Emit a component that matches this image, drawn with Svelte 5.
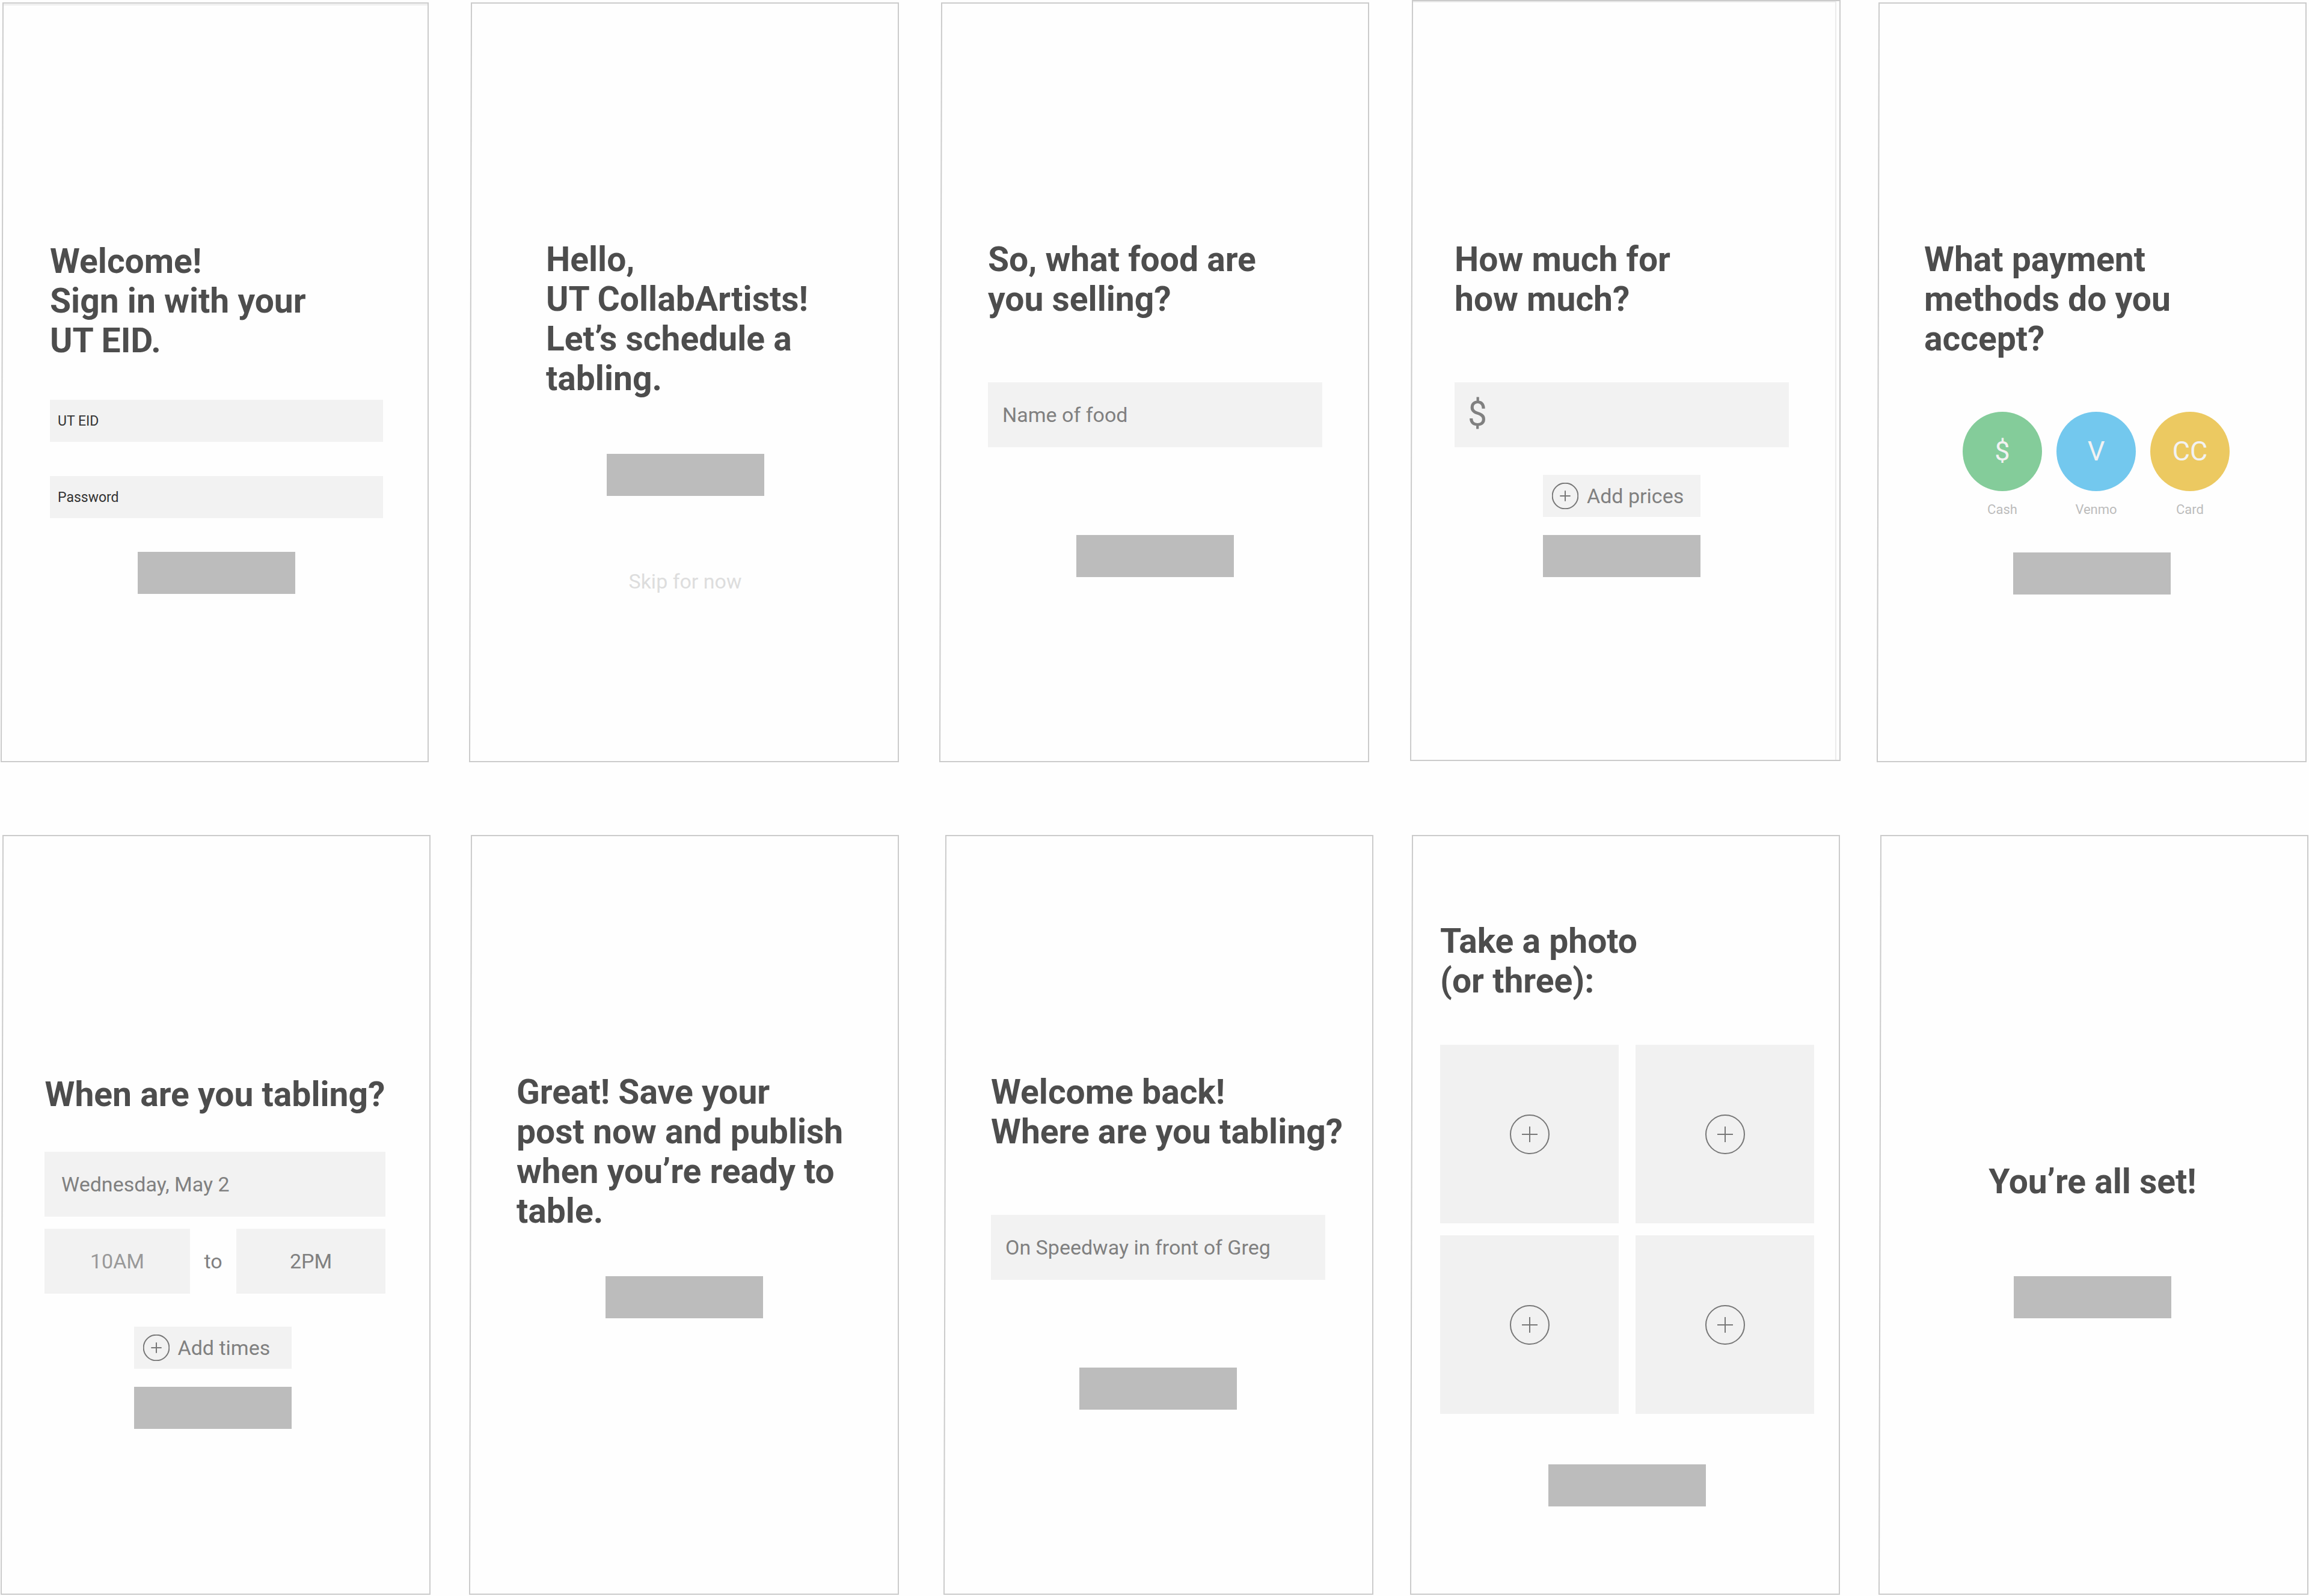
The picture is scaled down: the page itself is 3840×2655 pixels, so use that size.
<script>
  // Outline of each artboard, in the units of a 714 x 1262 frame.
  const frame = '3,0 713,0 713,1262 0,1262';
  const raisedFrame = '3,-4 714,-4 714,1260 0,1260';

  const methods = [
    { mark: '$', name: 'Cash', tone: 'green' },
    { mark: 'V', name: 'Venmo', tone: 'blue' },
    { mark: 'CC', name: 'Card', tone: 'yellow' }
  ];
  const photos = [1, 2, 3, 4];
</script>

{#snippet outline(points, rule = '')}
  <svg class="outline" viewBox="0 0 714 1262" preserveAspectRatio="none" aria-hidden="true">
    {#if rule}<polyline points={rule} />{/if}
    <polygon {points} />
  </svg>
{/snippet}

{#snippet plus()}
  <svg class="plus" viewBox="0 0 66 66" aria-hidden="true">
    <circle cx="33" cy="33" r="32" />
    <path d="M33 20v26M20 33h26" />
  </svg>
{/snippet}

<main class="page">
  <div class="row first">
    <section class="board sign-in">
      {@render outline(frame, '3,3 713,3')}
      <h2>Welcome!<br />Sign in with your<br />UT EID.</h2>
      <input class="field small" type="text" placeholder="UT EID" aria-label="UT EID" />
      <input class="field small" type="password" placeholder="Password" aria-label="Password" />
      <button class="next" aria-label="Sign in"></button>
    </section>

    <section class="board hello">
      {@render outline(frame)}
      <h2>Hello,<br />UT CollabArtists!<br />Let’s schedule a<br />tabling.</h2>
      <button class="next" aria-label="Start"></button>
      <a class="skip" href="#skip">Skip for now</a>
    </section>

    <section class="board food">
      {@render outline(frame)}
      <h2>So, what food are<br />you selling?</h2>
      <input class="field" type="text" placeholder="Name of food" aria-label="Name of food" />
      <button class="next" aria-label="Next"></button>
    </section>

    <section class="board price">
      {@render outline(raisedFrame, '3,-2 707,-2 707,1260')}
      <h2>How much for<br />how much?</h2>
      <input class="field amount" type="text" placeholder="$" aria-label="Price in dollars" />
      <button class="add">{@render plus()}Add prices</button>
      <button class="next" aria-label="Next"></button>
    </section>

    <section class="board payment">
      {@render outline(frame)}
      <h2>What payment<br />methods do you<br />accept?</h2>
      <div class="methods">
        {#each methods as m}
          <button class="method">
            <span class="disc {m.tone}">{m.mark}</span>
            <span class="name">{m.name}</span>
          </button>
        {/each}
      </div>
      <button class="next" aria-label="Next"></button>
    </section>
  </div>

  <div class="row second">
    <section class="board when">
      {@render outline(frame)}
      <h2>When are you tabling?</h2>
      <input class="field" type="text" value="Wednesday, May 2" aria-label="Date" />
      <div class="times">
        <input class="field from" type="text" value="10AM" aria-label="Start time" />
        <span>to</span>
        <input class="field" type="text" value="2PM" aria-label="End time" />
      </div>
      <div class="actions">
        <button class="add">{@render plus()}Add times</button>
        <button class="next" aria-label="Next"></button>
      </div>
    </section>

    <section class="board save">
      {@render outline(frame)}
      <h2>Great! Save your<br />post now and publish<br />when you’re ready to<br />table.</h2>
      <button class="next" aria-label="Save"></button>
    </section>

    <section class="board where">
      {@render outline(frame)}
      <h2>Welcome back!<br />Where are you tabling?</h2>
      <input class="field" type="text" value="On Speedway in front of Greg" aria-label="Place" />
      <button class="next" aria-label="Next"></button>
    </section>

    <section class="board photo">
      {@render outline(frame)}
      <h2>Take a photo<br />(or three):</h2>
      <div class="photos">
        {#each photos as n}
          <button class="tile" aria-label="Add photo {n}">{@render plus()}</button>
        {/each}
      </div>
      <button class="next" aria-label="Next"></button>
    </section>

    <section class="board done">
      {@render outline(frame)}
      <h2>You’re all set!</h2>
      <button class="next" aria-label="Finish"></button>
    </section>
  </div>
</main>

<style>
  :global(body) {
    background: #fefefe;
  }

  .page {
    display: flex;
    flex-direction: column;
    gap: 123px;
    padding: 5px 0 3px;
    font-family: Roboto, 'Liberation Sans', sans-serif;
    font-size: 34px;
    line-height: 40px;
    color: #808080;
  }

  /* Artboards sit on the odd tracks, the space between them on the even ones. */
  .row {
    display: grid;
  }
  .first {
    grid-template-columns: 711fr 68fr 714fr 68fr 714fr 69fr 714fr 62fr 714fr;
    padding: 0 4px 0 2px;
  }
  .second {
    grid-template-columns: 714fr 65fr 714fr 75fr 714fr 62fr 714fr 65fr 714fr;
    padding: 0 1px 0 2px;
  }
  .board:nth-child(1) { grid-column: 1; }
  .board:nth-child(2) { grid-column: 3; }
  .board:nth-child(3) { grid-column: 5; }
  .board:nth-child(4) { grid-column: 7; }
  .board:nth-child(5) { grid-column: 9; }

  .board {
    position: relative;
    box-sizing: border-box;
    min-width: 0;
    min-height: 1262px;
    display: flex;
    flex-direction: column;
    align-items: center;
    padding: 394px 78px 0 80px;
  }

  .outline {
    position: absolute;
    inset: 0;
    width: 100%;
    height: 100%;
    overflow: visible;
    pointer-events: none;
    fill: none;
    stroke-width: 2;
  }
  .outline polygon {
    stroke: #cbcbcb;
    vector-effect: non-scaling-stroke;
  }
  .outline polyline {
    stroke: #ececec;
    vector-effect: non-scaling-stroke;
  }

  h2 {
    align-self: stretch;
    margin: 0;
    font-size: 57px;
    line-height: 66px;
    font-weight: 700;
    color: #4d4d4d;
    white-space: nowrap;
  }

  button,
  input {
    box-sizing: border-box;
    margin: 0;
    padding: 0;
    border: 0;
    border-radius: 0;
    font: inherit;
    color: inherit;
  }

  .next,
  .add {
    flex: none;
    width: 262px;
    height: 70px;
  }
  .next {
    background: #bcbcbc;
  }
  .add {
    display: flex;
    align-items: center;
    gap: 14px;
    padding-left: 15px;
    background: #f2f2f2;
    white-space: nowrap;
  }

  .field {
    width: 100%;
    min-width: 0;
    height: 108px;
    padding: 0 24px;
    background: #f2f2f2;
  }
  .field::placeholder {
    color: inherit;
    opacity: 1;
  }
  .field.small {
    height: 70px;
    padding: 0 13px;
    font-size: 23px;
    color: #333;
  }
  .field.amount {
    padding: 0 22px 4px;
    font-size: 57px;
  }

  .plus {
    flex: none;
    width: 44px;
    height: 44px;
    fill: none;
    stroke: #777;
    stroke-width: 2;
  }
  .plus * {
    vector-effect: non-scaling-stroke;
  }

  .sign-in { padding: 397px 76px 0 81px; }
  .sign-in h2 { margin-bottom: 65px; }
  .sign-in .field { margin-bottom: 57px; }
  .sign-in .field + .field { margin-bottom: 56px; }

  .hello { padding-left: 127px; padding-right: 124px; }
  .hello h2 { margin-bottom: 92px; }
  .skip {
    margin-top: 122px;
    color: #ddd;
    text-decoration: none;
  }

  .food h2,
  .where h2,
  .price h2 { margin-bottom: 105px; }
  .food .field,
  .where .field { margin-bottom: 146px; }
  .where { padding-left: 78px; padding-right: 80px; }

  .price { padding-left: 73px; padding-right: 85px; }
  .price .add { margin: 46px 0 30px; }

  .payment,
  .save { padding-left: 78px; }
  .methods {
    display: flex;
    gap: 24px;
    margin: 88px 0 58px;
    padding-left: 14px;
  }
  .method {
    display: flex;
    flex-direction: column;
    align-items: center;
    gap: 18px;
    background: none;
  }
  .disc {
    display: grid;
    place-items: center;
    width: 132px;
    height: 132px;
    border-radius: 50%;
    font-size: 45px;
    color: #f2f2f2;
  }
  .green { background: #84cc9a; }
  .blue { background: #73c8ee; }
  .yellow { background: #ecc961; }
  .name {
    font-size: 22px;
    line-height: 26px;
    color: #bcbcbc;
  }

  .when { padding: 398px 75px 0 72px; }
  .when h2 {
    margin-bottom: 62px;
    text-align: center;
  }
  .when .field { padding: 0 28px; }
  .times {
    align-self: stretch;
    display: grid;
    grid-template-columns: 242fr 77fr 248fr;
    align-items: center;
    margin-top: 20px;
    text-align: center;
  }
  .times .field {
    text-align: center;
  }
  .from { color: #999; }
  .actions {
    display: flex;
    flex-direction: column;
    gap: 30px;
    margin-top: 55px;
    padding-right: 8px;
  }

  .save h2 { margin-bottom: 75px; }

  .photo { padding: 143px 43px 0 49px; }
  .photos {
    align-self: stretch;
    display: grid;
    grid-template-columns: 1fr 1fr;
    gap: 20px 28px;
    margin: 73px 0 84px;
  }
  .tile {
    display: grid;
    place-items: center;
    aspect-ratio: 1;
    background: #f1f1f1;
  }
  .tile .plus {
    width: 66px;
    height: 66px;
  }

  .done { padding: 543px 80px 0 76px; }
  .done h2 {
    margin-bottom: 124px;
    text-align: center;
  }
</style>
